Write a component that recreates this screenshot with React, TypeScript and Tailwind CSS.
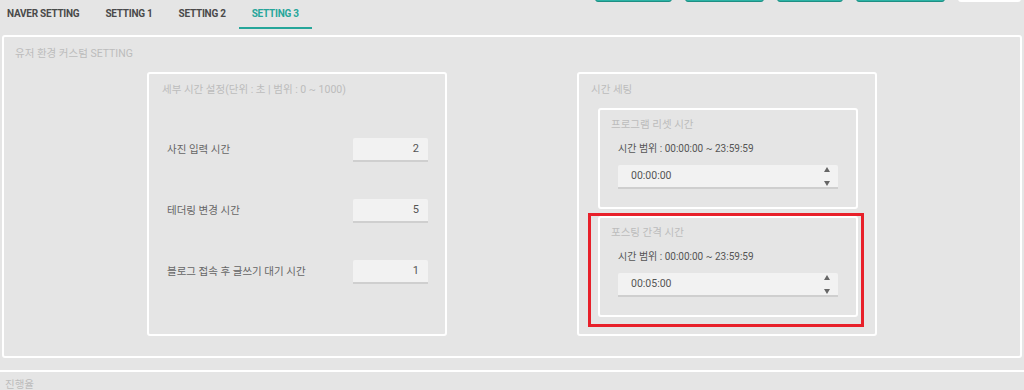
import React from "react";

const font = { fontFamily: '"Roboto", "Noto Sans CJK KR", sans-serif' };

const tabs = ["NAVER SETTING", "SETTING 1", "SETTING 2", "SETTING 3"];

function NumberRow({ label, value }: { label: string; value: string }) {
  return (
    <div className="flex items-center justify-between h-[24px]">
      <span className="text-[10.5px] text-[#666]">{label}</span>
      <div className="w-[75px] h-[24px] bg-[#f2f2f2] rounded-t-[2px] border-b-2 border-[#cfcfcf] flex items-center justify-end pr-[9px] text-[11px] text-[#555]">
        {value}
      </div>
    </div>
  );
}

function Spinner() {
  return (
    <div className="flex flex-col justify-between h-[19px] mr-[8px]">
      <svg width="6" height="5" viewBox="0 0 6 5">
        <polygon points="3,0 6,5 0,5" fill="#666" />
      </svg>
      <svg width="6" height="5" viewBox="0 0 6 5">
        <polygon points="0,0 6,0 3,5" fill="#666" />
      </svg>
    </div>
  );
}

function TimeBox({ title, value, highlight }: { title: string; value: string; highlight?: boolean }) {
  return (
    <div className="relative h-[101px] border-2 border-white rounded-[3px] pt-[7px] pl-[11px] pr-[18px]">
      {highlight && (
        <div className="absolute -left-[12px] -top-[5px] -right-[8px] -bottom-[12px] border-[3px] border-[#e8202a]" />
      )}
      <div className="text-[10.5px] leading-[16px] text-[#bcbcbc]">{title}</div>
      <div className="ml-[7px] mt-[8px] text-[10px] leading-[16px] text-[#555]">
        시간 범위 : 00:00:00 ~ 23:59:59
      </div>
      <div className="ml-[7px] mt-[8px] h-[24px] bg-[#f2f2f2] rounded-t-[2px] border-b-2 border-[#cfcfcf] flex items-center justify-between pl-[13px]">
        <span className="text-[10.5px] text-[#555]">{value}</span>
        <Spinner />
      </div>
    </div>
  );
}

export default function App() {
  return (
    <div className="w-[1024px] h-[390px] overflow-hidden bg-[#e5e5e5]" style={font}>
      {/* header */}
      <div className="flex h-[35px]">
        <div className="flex -ml-[6px]">
          {tabs.map((t, i) => (
            <div
              key={t}
              className={
                i === 3
                  ? "px-[13px] h-[29px] flex items-center text-[10px] tracking-[-0.25px] font-bold text-[#26a69a] border-b-2 border-[#26a69a]"
                  : "px-[13px] h-[29px] flex items-center text-[10px] tracking-[-0.25px] font-bold text-[#4a4a4a] border-b-2 border-transparent"
              }
            >
              {t}
            </div>
          ))}
        </div>
        <div className="ml-auto mr-[3px] flex gap-[13px] -mt-[28px] self-start">
          <div className="w-[77px] h-[30px] rounded-[3px] bg-[#2bb3a5] border-[1.5px] border-[#1f8f84]" />
          <div className="w-[79px] h-[30px] rounded-[3px] bg-[#2bb3a5] border-[1.5px] border-[#1f8f84]" />
          <div className="w-[66px] h-[30px] rounded-[3px] bg-[#2bb3a5] border-[1.5px] border-[#1f8f84]" />
          <div className="w-[89px] h-[30px] rounded-[3px] bg-[#2bb3a5] border-[1.5px] border-[#1f8f84]" />
          <div className="w-[63px] h-[30px] rounded-[3px] bg-[#e9e9e9] border-2 border-white" />
        </div>
      </div>

      {/* main panel */}
      <div className="mx-[2px] border-2 border-white rounded-[3px] pt-[9px] pb-[20px]">
        <div className="pl-[11px] text-[10.5px] leading-[16px] text-[#bcbcbc]">유저 환경 커스텀 SETTING</div>
        <div className="flex mt-[10px] ml-[143px] gap-[130px]">
          <div className="w-[300px] border-2 border-white rounded-[3px] pt-[8px] pl-[18px] pr-[17px]">
            <div className="-ml-[5px] text-[10.5px] leading-[16px] text-[#bcbcbc]">
              세부 시간 설정(단위 : 초 | 범위 : 0 ~ 1000)
            </div>
            <div className="mt-[40px] flex flex-col gap-[37px]">
              <NumberRow label="사진 입력 시간" value="2" />
              <NumberRow label="테더링 변경 시간" value="5" />
              <NumberRow label="블로그 접속 후 글쓰기 대기 시간" value="1" />
            </div>
          </div>
          <div className="w-[300px] border-2 border-white rounded-[3px] pt-[8px] pl-[19px] pr-[17px] pb-[17px]">
            <div className="-ml-[7px] text-[10.5px] leading-[16px] text-[#bcbcbc]">시간 세팅</div>
            <div className="mt-[10px] flex flex-col gap-[7px]">
              <TimeBox title="프로그램 리셋 시간" value="00:00:00" />
              <TimeBox title="포스팅 간격 시간" value="00:05:00" highlight />
            </div>
          </div>
        </div>
      </div>

      {/* progress */}
      <div className="mt-[12px] border-t-2 border-white pl-[5px] pt-[5px] text-[10.5px] leading-[16px] text-[#bcbcbc]">
        진행율
      </div>
    </div>
  );
}
